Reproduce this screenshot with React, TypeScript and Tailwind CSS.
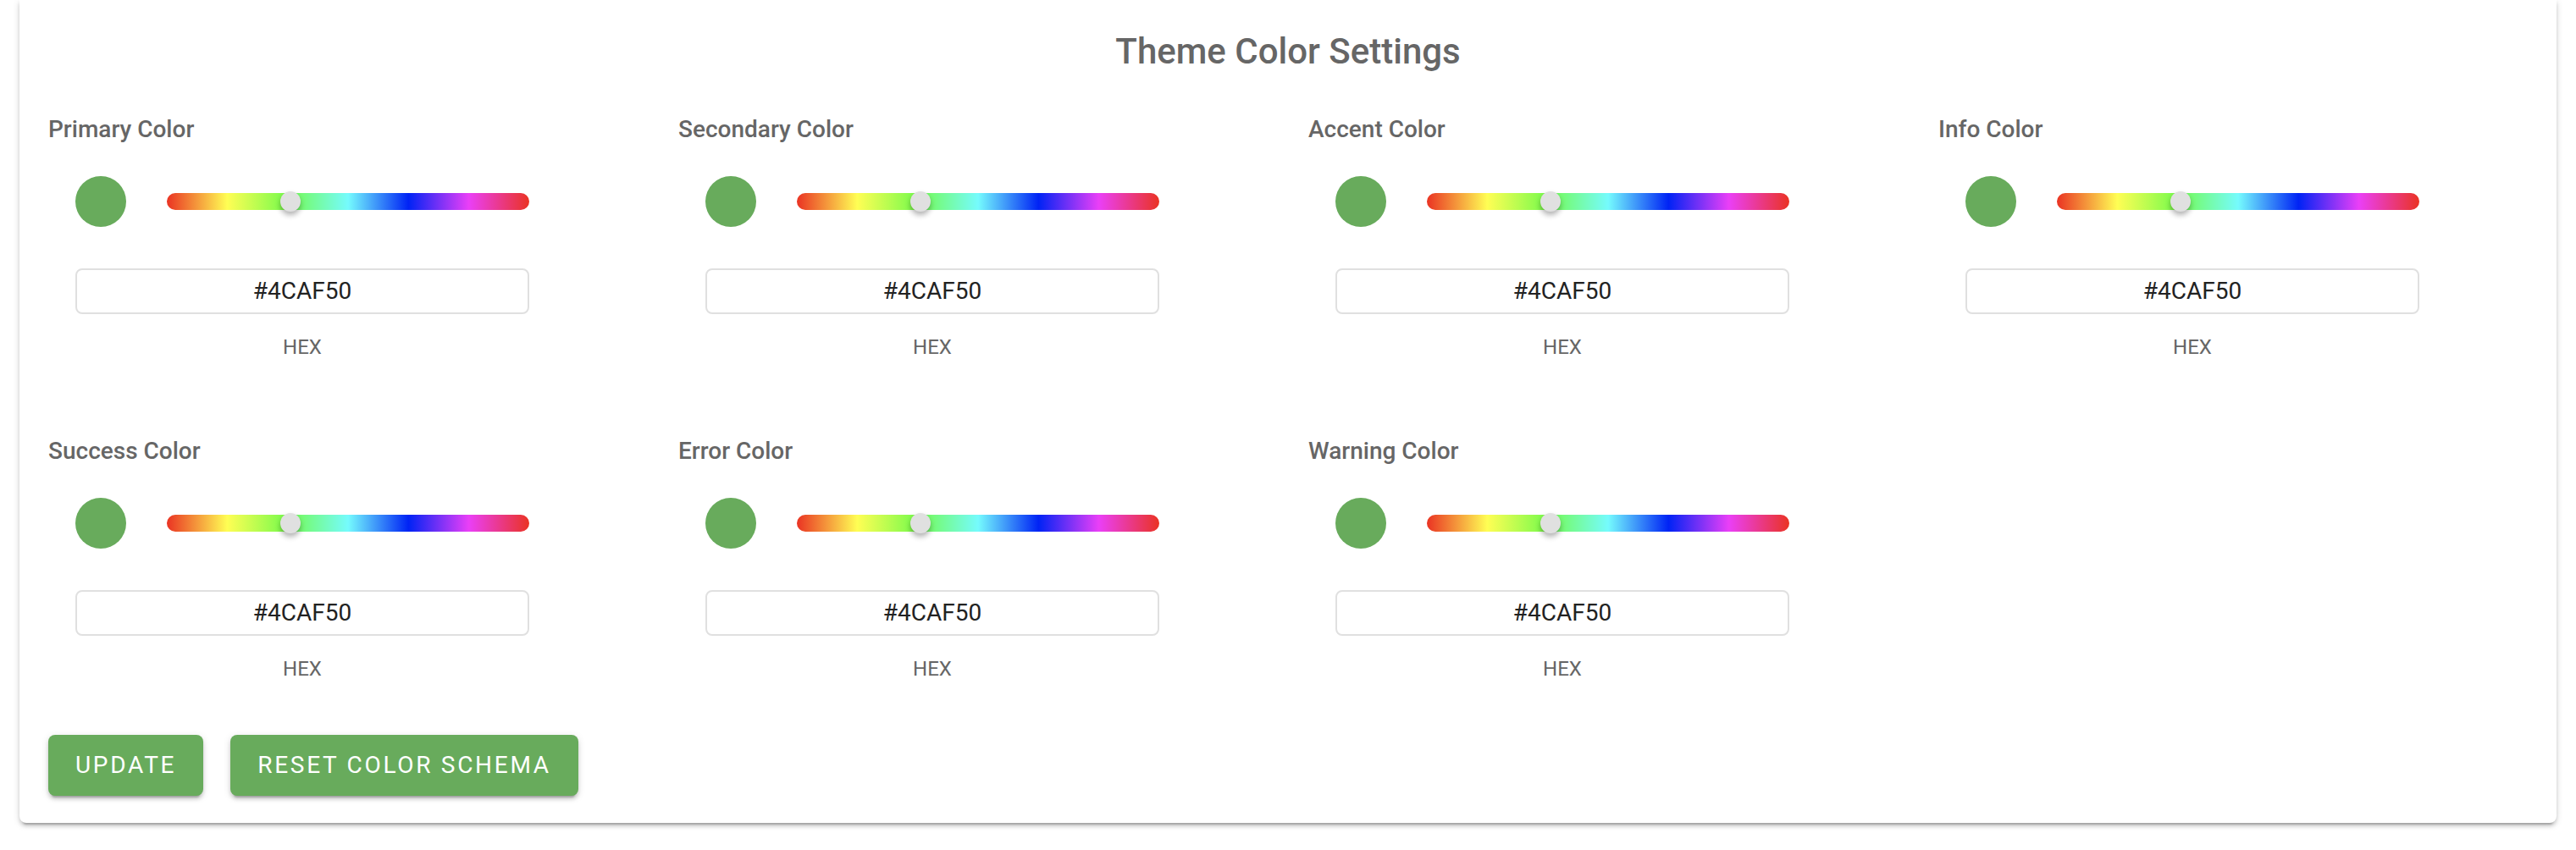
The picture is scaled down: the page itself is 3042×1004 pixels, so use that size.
import React from "react";

const FIELDS = [
  "Primary Color",
  "Secondary Color",
  "Accent Color",
  "Info Color",
  "Success Color",
  "Error Color",
  "Warning Color",
];

function ColorField({ label }: { label: string }) {
  return (
    <div className="px-[24px]">
      <div className="h-[40px] leading-[40px] text-[28px] font-medium text-[#666666]">{label}</div>
      <div className="w-[600px] px-[32px]">
        <div className="mt-[35px] flex h-[60px] items-center">
          <div className="h-[60px] w-[60px] shrink-0 rounded-full bg-[#68ab5c]" />
          <div className="relative ml-[48px] h-[20px] flex-1 rounded-full bg-[linear-gradient(to_right,#ea3323_0%,#fffe54_16.67%,#75fb4c_33.33%,#75fbfd_50%,#0023f5_66.67%,#ea3ff7_83.33%,#ea3323_100%)]">
            <div className="absolute left-[34%] top-1/2 h-[24px] w-[24px] -translate-x-1/2 -translate-y-1/2 rounded-full bg-[#e0e0e0] shadow-[0_4px_6px_rgba(0,0,0,0.3)]" />
          </div>
        </div>
        <div className="mt-[49px] flex h-[54px] items-center justify-center rounded-[8px] border-2 border-[#e0e0e0] text-[28px] text-[#222222]">
          #4CAF50
        </div>
        <div className="mt-[24px] h-[30px] text-center text-[24px] leading-[30px] text-[#666666]">HEX</div>
      </div>
    </div>
  );
}

export default function App() {
  return (
    <div className="min-h-[1004px] bg-white font-['Roboto',sans-serif]">
      <div className="mx-[23px] rounded-b-[8px] bg-white px-[10px] pb-[32px] shadow-[0_6px_2px_-4px_rgba(0,0,0,0.2),0_4px_4px_0_rgba(0,0,0,0.14),0_2px_10px_0_rgba(0,0,0,0.12)]">
        <div className="flex h-[120px] items-center justify-center text-[42px] font-medium text-[#666666]">
          Theme Color Settings
        </div>
        <div className="mt-[13px] grid grid-cols-4 gap-y-[88px]">
          {FIELDS.map((f) => (
            <ColorField key={f} label={f} />
          ))}
        </div>
        <div className="mt-[63px] flex gap-[32px] px-[24px]">
          <button className="h-[72px] rounded-[8px] bg-[#68ab5c] px-[32px] text-[28px] tracking-[2.7px] text-white shadow-[0_6px_2px_-4px_rgba(0,0,0,0.2),0_4px_4px_0_rgba(0,0,0,0.14),0_2px_10px_0_rgba(0,0,0,0.12)]">
            UPDATE
          </button>
          <button className="h-[72px] rounded-[8px] bg-[#68ab5c] px-[32px] text-[28px] tracking-[2.7px] text-white shadow-[0_6px_2px_-4px_rgba(0,0,0,0.2),0_4px_4px_0_rgba(0,0,0,0.14),0_2px_10px_0_rgba(0,0,0,0.12)]">
            RESET COLOR SCHEMA
          </button>
        </div>
      </div>
    </div>
  );
}
